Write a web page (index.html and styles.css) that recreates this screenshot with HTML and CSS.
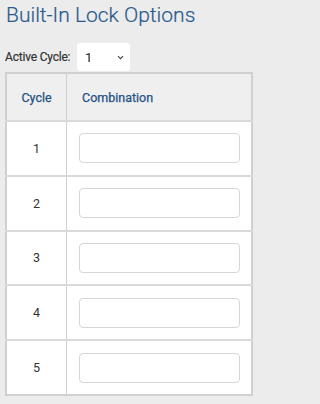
FILE: index.html
```html
<!DOCTYPE html>
<html>
<head>
<meta charset="utf-8">
<link rel="stylesheet" href="styles.css">
</head>
<body>
<div class="page">
  <h1 class="title">Built-In Lock Options</h1>
  <div class="cycle-row">
    <span class="cycle-label">Active Cycle:</span>
    <div class="select">
      <span class="select-value">1</span>
      <svg class="chev" width="7" height="5" viewBox="0 0 7 5"><path d="M1 1.2 L3.5 3.7 L6 1.2" fill="none" stroke="#444" stroke-width="1.1"/></svg>
    </div>
  </div>
  <table class="grid">
    <thead>
      <tr><th class="c-cycle">Cycle</th><th class="c-comb">Combination</th></tr>
    </thead>
    <tbody>
      <tr><td class="c-cycle">1</td><td class="c-comb"><div class="input"></div></td></tr>
      <tr><td class="c-cycle">2</td><td class="c-comb"><div class="input"></div></td></tr>
      <tr><td class="c-cycle">3</td><td class="c-comb"><div class="input"></div></td></tr>
      <tr><td class="c-cycle">4</td><td class="c-comb"><div class="input"></div></td></tr>
      <tr><td class="c-cycle">5</td><td class="c-comb"><div class="input"></div></td></tr>
    </tbody>
  </table>
</div>
</body>
</html>
```
FILE: styles.css
```css
html, body {
  margin: 0;
  padding: 0;
  background: #ececec;
  font-family: Roboto, "Liberation Sans", sans-serif;
}
.page {
  padding: 0 0 0 5px;
  width: 248px;
}
.title {
  margin: 0;
  padding-left: 1px;
  font-size: 21px;
  font-weight: 300;
  line-height: 30px;
  color: #2a5a8a;
  -webkit-text-stroke: 0.2px #2a5a8a;
}
.cycle-row {
  display: flex;
  align-items: center;
  margin-top: 13px;
  height: 28px;
}
.cycle-label {
  font-size: 12px;
  letter-spacing: -0.2px;
  color: #333;
  -webkit-text-stroke: 0.2px #333;
  width: 72px;
  flex-shrink: 0;
  white-space: nowrap;
}
.select {
  width: 53px;
  height: 28px;
  background: #fff;
  border-radius: 3px;
  display: flex;
  align-items: center;
  justify-content: space-between;
  padding: 0 6px 0 8px;
  box-sizing: border-box;
  font-size: 13px;
  color: #222;
}
.chev { margin-top: 1px; }
.grid {
  border-collapse: collapse;
  width: 248px;
  margin-top: 1px;
  border: 2px solid #d0d0d0;
}
.grid th, .grid td {
  border: 1px solid #cfcfcf;
  padding: 0;
}
.grid th {
  height: 46px;
  background: #efefef;
  font-size: 12.5px;
  font-weight: 400;
  color: #1f5285;
  -webkit-text-stroke: 0.25px #1f5285;
}
.grid th.c-cycle { text-align: center; width: 59px; }
.grid th.c-comb { text-align: left; padding-left: 15px; }
.grid td {
  height: 52.8px;
  background: #fff;
  border-top-width: 2px;
  border-top-color: #d9d9d9;
}
.grid td.c-cycle {
  text-align: center;
  font-size: 12.5px;
  color: #333;
}
.grid td.c-comb { padding: 0 11px 0 12px; }
.input {
  height: 28px;
  border: 1px solid #d6d6d6;
  border-radius: 4px;
  background: #fff;
}
```
